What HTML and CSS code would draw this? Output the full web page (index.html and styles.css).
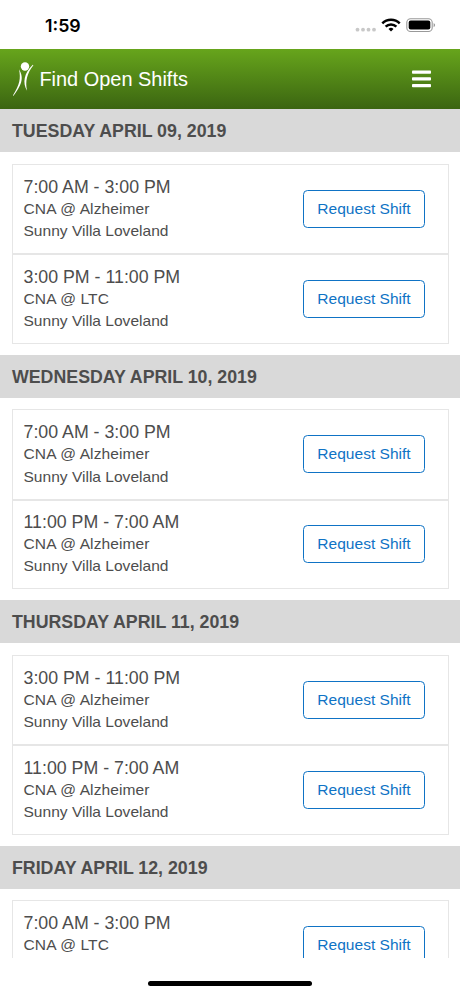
FILE: index.html
```html
<!DOCTYPE html>
<html lang="en">
<head>
<meta charset="utf-8">
<title>Find Open Shifts</title>
<link rel="stylesheet" href="styles.css">
</head>
<body>
<div class="status">
  <span class="clock">1:59</span>
  <svg class="status-icons" width="84" height="20" viewBox="0 0 84 20">
    <g fill="#c8c8c8"><circle cx="3.500" cy="13.700" r="1.900"/><circle cx="9" cy="13.700" r="1.900"/><circle cx="14.500" cy="13.700" r="1.900"/><circle cx="20" cy="13.700" r="1.900"/></g>
    <g fill="none" stroke="#000" stroke-width="2.500"><path d="M28.300 7.400a12.200 12.200 0 0 1 17.400 0"/><path d="M31.600 10.600a7.700 7.700 0 0 1 10.800 0"/></g>
    <path d="M34.500 12.900a3.600 3.600 0 0 1 5 0L37 15.600z"/>
    <rect x="52.800" y="2.700" width="25.400" height="12.800" rx="3.800" fill="#fff" stroke="#999" stroke-width="1.100"/>
    <rect x="54.700" y="4.600" width="21.600" height="9" rx="2"/>
    <path d="M79.600 7c2 .8 2 3.400 0 4.200z" fill="#999"/>
  </svg>
</div>
<header class="bar">
  <svg class="logo" width="24" height="36" viewBox="0 0 24 36">
    <circle cx="14" cy="5.500" r="4.200" fill="#fff"/>
    <path d="M8 8.300C12.400 16 12.200 22 2.500 34.800L1.900 34.400C8.800 23.500 9.900 17.500 8 8.300z" fill="#fff"/>
    <path d="M22.400 4.200C16 12.500 14 20 16.100 29.800C11.200 22 13 12 21.800 3.800z" fill="#fff"/>
  </svg>
  <h1 class="title">Find Open Shifts</h1>
  <svg class="menu" width="19" height="18" viewBox="0 0 19 18" fill="#fff"><rect y="0.600" width="19" height="3.200" rx=".8"/><rect y="7.300" width="19" height="3.200" rx=".8"/><rect y="14" width="19" height="3.200" rx=".8"/></svg>
</header>
<main class="list">
  <h2 class="day">TUESDAY APRIL 09, 2019</h2>
  <div class="card">
    <div class="shift"><div class="info"><p class="time">7:00 AM - 3:00 PM</p><p class="role">CNA @ Alzheimer</p><p>Sunny Villa Loveland</p></div><button class="request">Request Shift</button></div>
    <div class="shift"><div class="info"><p class="time">3:00 PM - 11:00 PM</p><p class="role">CNA @ LTC</p><p>Sunny Villa Loveland</p></div><button class="request">Request Shift</button></div>
  </div>
  <h2 class="day">WEDNESDAY APRIL 10, 2019</h2>
  <div class="card">
    <div class="shift"><div class="info"><p class="time">7:00 AM - 3:00 PM</p><p class="role">CNA @ Alzheimer</p><p>Sunny Villa Loveland</p></div><button class="request">Request Shift</button></div>
    <div class="shift"><div class="info"><p class="time">11:00 PM - 7:00 AM</p><p class="role">CNA @ Alzheimer</p><p>Sunny Villa Loveland</p></div><button class="request">Request Shift</button></div>
  </div>
  <h2 class="day">THURSDAY APRIL 11, 2019</h2>
  <div class="card">
    <div class="shift"><div class="info"><p class="time">3:00 PM - 11:00 PM</p><p class="role">CNA @ Alzheimer</p><p>Sunny Villa Loveland</p></div><button class="request">Request Shift</button></div>
    <div class="shift"><div class="info"><p class="time">11:00 PM - 7:00 AM</p><p class="role">CNA @ Alzheimer</p><p>Sunny Villa Loveland</p></div><button class="request">Request Shift</button></div>
  </div>
  <h2 class="day">FRIDAY APRIL 12, 2019</h2>
  <div class="card">
    <div class="shift"><div class="info"><p class="time">7:00 AM - 3:00 PM</p><p class="role">CNA @ LTC</p></div><button class="request">Request Shift</button></div>
  </div>
</main>
<footer class="home"><span class="home-bar"></span></footer>
</body>
</html>
```
FILE: styles.css
```css
* { box-sizing: border-box; }
body {
  margin: 0;
  height: 996px;
  display: flex;
  flex-direction: column;
  overflow: hidden;
  background: #fff;
  color: #4d4d4d;
  font-family: "Liberation Sans", Arial, sans-serif;
}
h1, h2, p { margin: 0; }
.status {
  flex: none;
  height: 49px;
  padding: 0 22px 0 45px;
  display: flex;
  align-items: center;
  justify-content: space-between;
}
.clock {
  font: 600 17.800px/20px Inter, sans-serif;
  color: #000;
  padding-top: 3px;
}
.status-icons { margin-top: 3px; }
.bar {
  flex: none;
  height: 60.150px;
  padding: 0 29px 0 11px;
  display: flex;
  align-items: center;
  background: linear-gradient(#67a51c, #3b6511);
  color: #fff;
}
.logo { margin-right: 4.400px; }
.title {
  flex: 1;
  font-size: 19.950px;
  font-weight: 400;
}
.list {
  flex: 1;
  min-height: 0;
  overflow: hidden;
}
.day {
  height: 43.300px;
  padding-left: 12px;
  background: #d9d9d9;
  font-size: 17.780px;
  line-height: 44.300px;
}
.card {
  margin: 11.200px 11.500px 11px;
  border: 1px solid #e6e6e6;
}
.shift {
  height: 88.600px;
  padding: 0 22.500px 0 11px;
  display: flex;
  align-items: center;
  justify-content: space-between;
}
.shift + .shift {
  height: 89.400px;
  border-top: 2px solid #e6e6e6;
}
.info {
  height: 66.600px;
  font-size: 15.560px;
  line-height: 22.200px;
}
.time { font-size: 17.780px; }
.role { letter-spacing: .1px; }
.request {
  width: 122px;
  height: 38px;
  padding: 0;
  border: 1px solid #0f73c5;
  border-radius: 4.500px;
  background: #fff;
  color: #0f73c5;
  font: 15.560px "Liberation Sans", Arial, sans-serif;
}
.home {
  flex: none;
  height: 38px;
  display: flex;
  justify-content: center;
  padding-top: 23px;
}
.home-bar {
  width: 164px;
  height: 5px;
  border-radius: 3px;
  background: #000;
}
```
